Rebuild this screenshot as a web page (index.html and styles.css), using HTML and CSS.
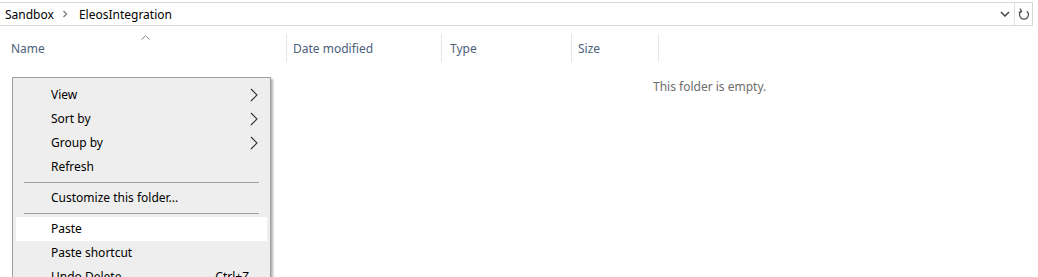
FILE: index.html
```html
<!DOCTYPE html>
<html lang="en">
<head>
    <meta charset="UTF-8">
    <title>EleosIntegration</title>
    <link rel="stylesheet" href="styles.css">
</head>
<body>
    <!-- Barra de direccion -->
    <div class="address-bar">
        <div class="crumbs">
            <span class="crumb">Sandbox</span>
            <svg class="crumb-sep" width="6" height="8" viewBox="0 0 6 8"><polyline points="1.5,1 4.5,4 1.5,7" fill="none" stroke="#777" stroke-width="1.2"/></svg>
            <span class="crumb">EleosIntegration</span>
        </div>
        <svg class="drop" width="10" height="6" viewBox="0 0 10 6"><polyline points="1,1 5,5 9,1" fill="none" stroke="#444" stroke-width="1.5"/></svg>
        <div class="refresh">
            <svg width="12" height="14" viewBox="0 0 12 14"><path d="M3.2 4.2 A4.5 4.5 0 1 0 8.8 4.2" fill="none" stroke="#555" stroke-width="1.3"/><polyline points="2,1.5 3.6,4.4 0.8,5.6" fill="none" stroke="#555" stroke-width="1.3"/></svg>
        </div>
    </div>

    <!-- Cabeceras de columnas -->
    <div class="columns">
        <div class="col col-name">Name
            <svg class="sort" width="9" height="5" viewBox="0 0 9 5"><polyline points="0.5,4.5 4.5,0.8 8.5,4.5" fill="none" stroke="#888" stroke-width="1"/></svg>
        </div>
        <div class="col col-date">Date modified</div>
        <div class="col col-type">Type</div>
        <div class="col col-size">Size</div>
    </div>

    <div class="empty">This folder is empty.</div>

    <!-- Menu contextual -->
    <div class="menu">
        <div class="item">View <svg class="arrow" width="8" height="14" viewBox="0 0 8 14"><polyline points="1,1 7,7 1,13" fill="none" stroke="#333" stroke-width="1.1"/></svg></div>
        <div class="item">Sort by <svg class="arrow" width="8" height="14" viewBox="0 0 8 14"><polyline points="1,1 7,7 1,13" fill="none" stroke="#333" stroke-width="1.1"/></svg></div>
        <div class="item">Group by <svg class="arrow" width="8" height="14" viewBox="0 0 8 14"><polyline points="1,1 7,7 1,13" fill="none" stroke="#333" stroke-width="1.1"/></svg></div>
        <div class="item">Refresh</div>
        <div class="sep"></div>
        <div class="item">Customize this folder...</div>
        <div class="sep"></div>
        <div class="item active">Paste</div>
        <div class="item">Paste shortcut</div>
        <div class="item">Undo Delete <span class="key">Ctrl+Z</span></div>
    </div>
</body>
</html>
```

FILE: styles.css
```css
/* Estilos generales */
body {
    margin: 0;
    font-family: 'Noto Sans', 'Liberation Sans', sans-serif;
    font-size: 12px;
    color: #000;
    background: #fff;
    overflow: hidden;
    height: 277px;
}

/* Barra de direccion */
.address-bar {
    display: flex;
    align-items: center;
    margin-top: 2px;
    margin-right: 5px;
    height: 22px;
    border-top: 1px solid #d9d9d9;
    border-bottom: 1px solid #d9d9d9;
    border-right: 1px solid #d9d9d9;
}

.crumbs {
    flex: 1;
    display: flex;
    align-items: center;
    padding-left: 5px;
}

.crumb-sep {
    margin: 0 11px 0 8px;
}

.drop {
    margin-right: 4px;
}

.refresh {
    width: 17px;
    height: 22px;
    border-left: 1px solid #e3e3e3;
    display: flex;
    align-items: center;
    justify-content: center;
}

/* Columnas */
.columns {
    display: flex;
    margin-top: 8px;
    height: 28px;
}

.col {
    position: relative;
    display: flex;
    align-items: center;
    color: #4c607a;
    border-right: 1px solid #e5e5e5;
    box-sizing: border-box;
}

.col-name { width: 287px; padding-left: 11px; }
.col-date { width: 155px; padding-left: 6px; }
.col-type { width: 130px; padding-left: 8px; }
.col-size { width: 87px; padding-left: 6px; }

.sort {
    position: absolute;
    left: 141px;
    top: 1px;
}

.empty {
    padding-left: 653px;
    padding-top: 16px;
    color: #6d6d6d;
}

/* Menu contextual */
.menu {
    position: absolute;
    left: 12px;
    top: 77px;
    width: 253px;
    padding: 5px 2px 2px 2px;
    background: #eeeeee;
    border: 1px solid #a0a0a0;
    box-shadow: 2px 2px 2px rgba(0, 0, 0, 0.3);
}

.item {
    position: relative;
    height: 24px;
    line-height: 24px;
    padding-left: 35px;
    margin: 0 1px;
}

.item.active {
    background: #ffffff;
}

.arrow {
    position: absolute;
    right: 9px;
    top: 5px;
}

.key {
    position: absolute;
    right: 18px;
}

.sep {
    height: 1px;
    background: #a0a0a0;
    margin: 3px 9px 3px 9px;
}
```
